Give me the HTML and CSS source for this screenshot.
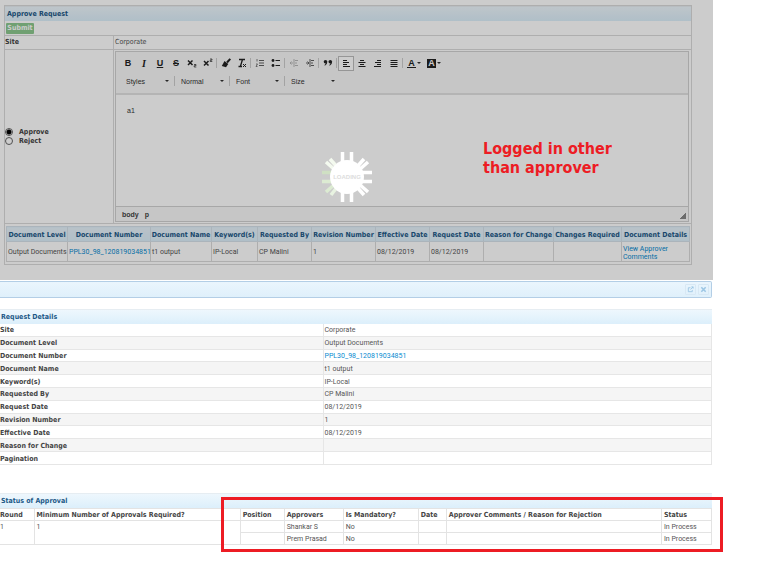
FILE: index.html
```
<!DOCTYPE html>
<html lang="en">
<head>
  <meta charset="UTF-8" />
  <meta name="viewport" content="width=device-width, initial-scale=1.0" />
  <title>Approve Request</title>
  <link rel="stylesheet" href="styles.css">
</head>
<body>
  <section class="approve">
    <form class="panel">
      <h2 class="panel-title">Approve Request</h2>
      <div class="actions"><button type="button" class="submit">Submit</button></div>
      <div class="form-row">
        <div class="form-label">Site</div>
        <div class="form-value">Corporate</div>
      </div>
      <div class="form-row">
        <div class="form-label choices">
          <label><input type="radio" name="decision" checked>Approve</label>
          <label><input type="radio" name="decision">Reject</label>
        </div>
        <div class="form-editor">
          <div class="editor">
            <div class="toolbar">
              <div class="tools">
                <button type="button" class="tool"><b>B</b></button>
                <button type="button" class="tool serif"><i>I</i></button>
                <button type="button" class="tool"><u>U</u></button>
                <button type="button" class="tool"><s>S</s></button>
                <button type="button" class="tool" aria-label="Subscript"><svg viewBox="0 0 10 10"><path d="M1 2.500l4.500 4.500M5.500 2.500L1 7" stroke-width="1.500"/><path d="M7 6.500h2v1.200H7.200V9H9.300" stroke-width=".7"/></svg></button>
                <button type="button" class="tool" aria-label="Superscript"><svg viewBox="0 0 10 10"><path d="M1 3l4.500 4.500M5.500 3L1 7.500" stroke-width="1.500"/><path d="M7 1h2v1.200H7.200v1.300H9.300" stroke-width=".7"/></svg></button>
                <span class="sep"></span>
                <button type="button" class="tool" aria-label="Copy formatting"><svg viewBox="0 0 10 10"><path d="M9.300 .8L6 4.500" stroke-width="2"/><path d="M3.500 3l3.800 3-2.300 3.200-4.200-1.200z" fill="#222" stroke="none"/></svg></button>
                <button type="button" class="tool" aria-label="Remove format"><svg viewBox="0 0 10 10"><path d="M2 1.500h6M5.500 1.500L3.500 8M1.500 8.500h3.500" stroke-width="1.300"/><path d="M6 6l3 3M9 6L6 9"/></svg></button>
                <span class="sep"></span>
                <button type="button" class="tool mid" aria-label="Numbered list"><svg viewBox="0 0 10 10"><path d="M4 2.500h5M4 5h5M4 7.500h5"/><path d="M2 1v2.500M1 6h1.500L1 8.500h1.500" stroke-width=".8"/></svg></button>
                <button type="button" class="tool" aria-label="Bulleted list"><svg viewBox="0 0 10 10"><path d="M4.500 2.500H9M4.500 7.500H9" stroke-width="1.200"/><circle cx="2" cy="2.500" r="1.400" fill="#222" stroke="none"/><circle cx="2" cy="7.500" r="1.400" fill="#222" stroke="none"/></svg></button>
                <span class="sep"></span>
                <button type="button" class="tool off" aria-label="Decrease indent" disabled><svg viewBox="0 0 10 10"><path d="M1 5h3M2.500 3.500L1 5l1.500 1.500M5 1v8M6 2.500h3M6 5h2M6 7.500h3"/></svg></button>
                <button type="button" class="tool mid" aria-label="Increase indent"><svg viewBox="0 0 10 10"><path d="M1 5h3M2.500 3.500L4 5 2.500 6.500M5 1v8M6 2.500h3M6 5h2M6 7.500h3"/></svg></button>
                <span class="sep"></span>
                <button type="button" class="tool" aria-label="Quote"><svg viewBox="0 0 10 10"><g fill="#222" stroke="none"><circle cx="2.500" cy="3.700" r="1.800"/><circle cx="7.300" cy="3.700" r="1.800"/><path d="M4.300 3.700q0 3-2.400 4l-.4-.8q1.400-.8 1.200-2zM9.100 3.700q0 3-2.400 4l-.4-.8q1.400-.8 1.200-2z"/></g></svg></button>
                <span class="sep"></span>
                <button type="button" class="tool on" aria-label="Align left"><svg viewBox="0 0 10 10"><path d="M2 2.500h4M2 4.500h6M2 6.500h4M2 8.500h7"/></svg></button>
                <button type="button" class="tool" aria-label="Center"><svg viewBox="0 0 10 10"><path d="M3 2.500h4M1.500 4.500h7M3 6.500h4M1.500 8.500h7"/></svg></button>
                <button type="button" class="tool" aria-label="Align right"><svg viewBox="0 0 10 10"><path d="M4 2.500h4M2 4.500h6M4 6.500h4M1 8.500h7"/></svg></button>
                <button type="button" class="tool" aria-label="Justify"><svg viewBox="0 0 10 10"><path d="M1.500 2.500h7M1.500 4.500h7M1.500 6.500h7M1.500 8.500h7"/></svg></button>
                <span class="sep"></span>
                <button type="button" class="tool wide"><span class="ink">A</span><span class="caret"></span></button>
                <button type="button" class="tool wide"><span class="fill">A</span><span class="caret"></span></button>
              </div>
              <div class="combos">
                <span class="combo"><select aria-label="Styles"><option>Styles</option></select><span class="caret"></span></span>
                <span class="combo"><select aria-label="Paragraph format"><option>Normal</option></select><span class="caret"></span></span>
                <span class="combo"><select aria-label="Font"><option>Font</option></select><span class="caret"></span></span>
                <span class="combo"><select aria-label="Size"><option>Size</option></select><span class="caret"></span></span>
              </div>
            </div>
            <textarea class="editor-body" aria-label="Comments">a1</textarea>
            <div class="editor-path"><span>body</span><span>p</span><i class="grip"></i></div>
          </div>
        </div>
      </div>
      <div class="documents">
        <table class="doc-table">
          <colgroup>
            <col class="w61"><col class="w83"><col class="w61"><col class="w46"><col class="w54"><col class="w64"><col class="w54"><col class="w54"><col class="w70"><col class="w68"><col class="w68">
          </colgroup>
          <thead>
            <tr><th>Document Level</th><th>Document Number</th><th>Document Name</th><th>Keyword(s)</th><th>Requested By</th><th>Revision Number</th><th>Effective Date</th><th>Request Date</th><th>Reason for Change</th><th>Changes Required</th><th>Document Details</th></tr>
          </thead>
          <tbody>
            <tr><td>Output Documents</td><td><a href="#">PPL30_98_120819034851</a></td><td>t1 output</td><td>IP-Local</td><td>CP Malini</td><td>1</td><td>08/12/2019</td><td>08/12/2019</td><td></td><td></td><td class="wrap"><a href="#">View Approver Comments</a></td></tr>
          </tbody>
        </table>
      </div>
    </form>
    <div class="shade"></div>
    <div class="loader">
      <svg viewBox="0 0 52 52">
        <g stroke="#fff" stroke-width="3.500">
          <path d="M30.500 1v12M30.500 39v12M21.500 39v12M21.500 1v12M39 21.500h12M39 30.500h12M35 17l8-9M38 19l9-8M35 35l8 9M38 33l9 8"/>
          <path d="M17 17L9 8M14 19L5 11" stroke="#f4faef"/>
          <path d="M13 21.500H1" stroke="#cfe0c3"/>
          <path d="M13 30.500H1M14 33l-9 8" stroke="#dcebd2"/>
          <path d="M17 35l-7 9" stroke="#e8f3e1"/>
        </g>
        <circle cx="26" cy="26" r="17" fill="#fff" stroke="none"/>
        <text x="26" y="28" text-anchor="middle">LOADING</text>
      </svg>
    </div>
    <p class="note">Logged in other<br>than approver</p>
  </section>

  <div class="dialog-bar">
    <button type="button" aria-label="Open in new window"><svg viewBox="0 0 8 8"><path d="M4 2H1.500v4.500H6V4.500M4 4l3-3M5 1h2v2"/></svg></button>
    <button type="button" aria-label="Close"><svg viewBox="0 0 8 8"><path d="M1.500 1.500l5 5M6.500 1.500l-5 5" stroke-width="1.800"/></svg></button>
  </div>

  <section class="details">
    <h2 class="panel-title">Request Details</h2>
    <table class="detail-table">
      <tr><th>Site</th><td>Corporate</td></tr>
      <tr><th>Document Level</th><td>Output Documents</td></tr>
      <tr><th>Document Number</th><td><a href="#">PPL30_98_120819034851</a></td></tr>
      <tr><th>Document Name</th><td>t1 output</td></tr>
      <tr><th>Keyword(s)</th><td>IP-Local</td></tr>
      <tr><th>Requested By</th><td>CP Malini</td></tr>
      <tr><th>Request Date</th><td>08/12/2019</td></tr>
      <tr><th>Revision Number</th><td>1</td></tr>
      <tr><th>Effective Date</th><td>08/12/2019</td></tr>
      <tr><th>Reason for Change</th><td></td></tr>
      <tr><th>Pagination</th><td></td></tr>
    </table>
  </section>

  <section class="status">
    <h2 class="panel-title">Status of Approval</h2>
    <table class="status-table">
      <colgroup>
        <col class="c-round"><col class="c-min"><col class="c-pos"><col class="c-who"><col class="c-must"><col class="c-date"><col class="c-text"><col class="c-state">
      </colgroup>
      <thead>
        <tr><th>Round</th><th>Minimum Number of Approvals Required?</th><th>Position</th><th>Approvers</th><th>Is Mandatory?</th><th>Date</th><th>Approver Comments / Reason for Rejection</th><th>Status</th></tr>
      </thead>
      <tbody>
        <tr><td rowspan="2">1</td><td rowspan="2">1</td><td></td><td>Shankar S</td><td>No</td><td></td><td></td><td>In Process</td></tr>
        <tr><td></td><td>Prem Prasad</td><td>No</td><td></td><td></td><td>In Process</td></tr>
      </tbody>
    </table>
    <div class="marker"></div>
  </section>
</body>
</html>
```
FILE: styles.css
```
* { margin: 0; padding: 0; box-sizing: border-box; }

body {
  min-height: 100vh;
  background: #fff;
  color: #555;
  font-family: "DejaVu Sans Condensed", "DejaVu Sans", sans-serif;
  font-size: 7px;
  line-height: 9px;
  padding: 0 47px 16px 0;
}

button, select, textarea { font: inherit; color: inherit; border: 0; background: none; }
a { color: #088bd0; text-decoration: none; }
table { width: 100%; table-layout: fixed; border-collapse: collapse; }
th { color: #444; text-align: left; white-space: nowrap; }
td { font-family: Roboto, Arial, sans-serif; white-space: nowrap; }
svg { display: block; fill: none; stroke: #222; }

.panel-title {
  height: 15px;
  padding: 0 1px;
  font-size: 7px;
  line-height: 15px;
  color: #1d5987;
  border-top: 1px solid #e6edf2;
  background: linear-gradient(#eef7fd, #dceffb);
}

/* approve form */
.approve {
  position: relative;
  padding: 5px 21px 15px 4px;
}
.panel { border: 1px solid #dadada; }
.approve .panel-title { padding: 0 2px; }
.actions {
  height: 15px;
  padding: 2px 1px;
  border-bottom: 1px solid #dadada;
}
.submit {
  display: block;
  width: 28px;
  height: 11px;
  line-height: 11px;
  font-weight: bold;
  color: #fff;
  background: #8cc98f;
  border-radius: 1px;
}
.form-row {
  display: flex;
  border-bottom: 1px solid #dadada;
}
.form-label {
  width: 109px;
  padding: 2px 0;
  font-weight: bold;
  color: #444;
  border-right: 1px solid #dadada;
}
.form-value { padding: 2px 1px; }
.choices {
  display: flex;
  flex-direction: column;
  justify-content: center;
}
.choices label { display: flex; align-items: center; }
.choices input {
  appearance: none;
  width: 8px;
  height: 8px;
  margin-right: 6px;
  border: 1px solid #666;
  border-radius: 50%;
  background: #fff;
}
.choices input:checked { background: radial-gradient(#000 2px, #fff 3px); }
.form-editor { flex: 1; padding: 1px 2px 1px 1px; }

.editor {
  border: 1px solid #d1d1d1;
  font-family: "Liberation Sans", Arial, sans-serif;
}
.toolbar {
  height: 43px;
  padding: 3px 4px;
  background: #f8f8f8;
  border-bottom: 2px solid #e2e2e2;
}
.tools { display: flex; align-items: center; height: 16px; }
.tool {
  display: flex;
  align-items: center;
  justify-content: center;
  width: 16px;
  height: 15px;
  font-size: 9px;
  color: #222;
}
.tool u, .tool s { font-weight: bold; }
.tool svg { width: 10px; height: 10px; flex: none; }
.tool.serif { font-family: "Liberation Serif", serif; font-size: 10px; font-weight: bold; }
.tool.on { border: 1px solid #bcbcbc; background: #fff; }
.tool.off { opacity: .3; }
.tool.mid { opacity: .7; }
.tool.wide { width: 20px; gap: 1px; font-size: 9px; font-weight: bold; }
.ink { border-bottom: 1px solid #222; padding: 0 1px; line-height: 8px; }
.fill { background: #222; color: #fff; padding: 0 1px; line-height: 9px; }
.sep { width: 1px; height: 10px; margin-right: 1px; background: #ccc; }
.caret {
  border: 2px solid transparent;
  border-top-color: #333;
  border-bottom: 0;
}
.combos { display: flex; align-items: center; height: 20px; }
.combo {
  display: flex;
  align-items: center;
  width: 55px;
  height: 10px;
  padding: 0 5px 0 6px;
  border-right: 1px solid #ccc;
}
.combo:last-child { border-right: 0; }
.combo select {
  appearance: none;
  flex: 1;
  min-width: 0;
  color: #333;
}
.editor-body {
  display: block;
  width: 100%;
  height: 111px;
  padding: 11px;
  resize: none;
  color: #333;
  background: #fff;
}
.editor-path {
  display: flex;
  align-items: center;
  gap: 6px;
  height: 15px;
  padding: 0 2px 0 6px;
  font-weight: bold;
  color: #444;
  background: #f8f8f8;
  border-top: 1px solid #d1d1d1;
}
.grip {
  width: 6px;
  height: 6px;
  margin-left: auto;
  align-self: flex-end;
  margin-bottom: 2px;
  background: linear-gradient(135deg, transparent 50%, #888 50%);
}

.documents { padding: 2px 2px 2px 1px; }
.doc-table th {
  height: 15px;
  padding-top: 2px;
  text-align: center;
  color: #1d5987;
  background: linear-gradient(#e8f3fa, #dceffb);
  border: 1px solid #d6e2ea;
}
.doc-table td {
  height: 20px;
  padding: 2px 0 0 1px;
  border: 1px solid #dadada;
}
.doc-table .wrap { white-space: normal; line-height: 8px; }
.w46 { width: 46px; }
.w54 { width: 54px; }
.w61 { width: 61px; }
.w64 { width: 64px; }
.w68 { width: 68px; }
.w70 { width: 70px; }
.w83 { width: 83px; }

.shade {
  position: absolute;
  inset: 0;
  background: rgba(0,0,0,.2);
}
.loader {
  position: absolute;
  top: 151px;
  left: 321px;
  width: 52px;
}
.loader text {
  font: bold 6px "Liberation Sans", sans-serif;
  fill: #ddd;
  stroke: none;
}
.note {
  position: absolute;
  top: 139px;
  left: 483px;
  font-size: 16px;
  line-height: 19px;
  font-weight: bold;
  color: #ed1c24;
}

.dialog-bar {
  display: flex;
  align-items: center;
  justify-content: flex-end;
  gap: 2px;
  height: 17px;
  margin: 1px 1px 11px 0;
  padding-right: 2px;
  border: 1px solid #b3cee6;
  border-left: 0;
  border-radius: 0 2px 2px 0;
  background: linear-gradient(#eaf5fd, #dff0fb);
}
.dialog-bar button {
  width: 11px;
  height: 11px;
  padding: 1px;
  border: 1px solid #d8e8f4;
  border-radius: 1px;
}
.dialog-bar svg { stroke: #9cc6e4; }

/* details + status */
.details, .status { margin-right: 1px; }
.detail-table { height: 141px; border-right: 1px solid #e6e6e6; }
.detail-table th {
  width: 323px;
  border-right: 1px solid #e6e6e6;
}
.detail-table th, .detail-table td { padding-top: 2px; border-bottom: 1px solid #e6e6e6; }
.detail-table td { padding-left: 1px; }
.detail-table tr:nth-child(even) { background: #f5f5f5; }

.status { position: relative; margin-top: 28px; }
.status-table th, .status-table td {
  height: 12px;
  padding: 2px 0 0 2px;
  border: 1px solid #e3e3e3;
}
.status-table th:first-child, .status-table td[rowspan]:first-child { padding-left: 0; border-left: 0; }
.status-table td[rowspan] { vertical-align: top; }
.c-round { width: 34px; }
.c-min { width: 206px; }
.c-pos { width: 44px; }
.c-who { width: 59px; }
.c-must { width: 75px; }
.c-date { width: 28px; }
.c-text { width: 215px; }
.c-state { width: 50px; }
.marker {
  position: absolute;
  top: 4px;
  bottom: -7px;
  left: 221px;
  right: -11px;
  border: 3px solid #ed1c24;
}
```
